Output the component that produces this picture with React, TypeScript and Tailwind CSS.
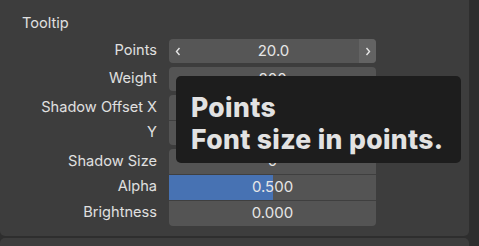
import React from 'react';

type Row = { label: string; value: string; h: string; fill?: number };

function Chevron({ dir }: { dir: 'left' | 'right' }) {
  return (
    <svg width="6" height="9" viewBox="0 0 6 9" className="shrink-0">
      <polyline
        points={dir === 'left' ? '4.5,1 1.5,4.5 4.5,8' : '1.5,1 4.5,4.5 1.5,8'}
        fill="none"
        stroke="#e6e6e6"
        strokeWidth="1.4"
      />
    </svg>
  );
}

function Label({ text }: { text: string }) {
  return <div className="w-[157px] shrink-0 text-right text-[14.6px] text-[#e0e0e0]">{text}</div>;
}

function Block({ rows }: { rows: Row[] }) {
  return (
    <div className="flex flex-col">
      {rows.map((r, i) => (
        <div key={r.label} className={`flex items-center gap-3 ${r.h}`}>
          <Label text={r.label} />
          <div
            className={`relative flex h-full w-[207px] items-center justify-center overflow-hidden bg-[#545454] text-[15px] text-[#e6e6e6] ${
              i === 0 ? 'rounded-t-[4px]' : 'border-t border-[#3f3f3f]'
            } ${i === rows.length - 1 ? 'rounded-b-[4px]' : ''}`}
          >
            {r.fill !== undefined && (
              <div className="absolute inset-y-0 left-0 bg-[#4772b3]" style={{ width: `${r.fill * 100}%` }} />
            )}
            <span className="relative">{r.value}</span>
          </div>
        </div>
      ))}
    </div>
  );
}

export default function App() {
  return (
    <div className="h-[246px] w-[479px] overflow-hidden bg-[#2e2e2e] font-['Inter',sans-serif]">
      <div className="relative h-[236px] w-[469px] rounded-b-[5px] bg-[#3d3d3d] pt-[13px]">
        <div className="pl-[22px] text-[14.6px] leading-5 text-[#e0e0e0]">Tooltip</div>

        <div className="mt-[6px] flex flex-col gap-1">
          <div className="flex h-6 items-center gap-3">
            <Label text="Points" />
            <div className="flex h-full w-[207px] items-center overflow-hidden rounded-[4px] bg-[#565656] text-[15px] text-[#e6e6e6]">
              <div className="flex w-[17px] justify-center">
                <Chevron dir="left" />
              </div>
              <div className="flex-1 pl-[2px] text-center">20.0</div>
              <div className="flex h-full w-[17px] items-center justify-center bg-[#636363]">
                <Chevron dir="right" />
              </div>
            </div>
          </div>

          <Block rows={[{ label: 'Weight', value: '800', h: 'h-6' }]} />

          <Block
            rows={[
              { label: 'Shadow Offset X', value: '', h: 'h-[25px]' },
              { label: 'Y', value: '', h: 'h-[25px]' },
            ]}
          />

          <Block
            rows={[
              { label: 'Shadow Size', value: '0', h: 'h-[25px]' },
              { label: 'Alpha', value: '0.500', h: 'h-[26px]', fill: 0.5 },
              { label: 'Brightness', value: '0.000', h: 'h-[26px]' },
            ]}
          />
        </div>

        {/* tooltip over the fields */}
        <div className="absolute left-[176px] top-[76px] w-[285px] rounded-[5px] bg-[#1d1d1d] px-[15px] pb-[8px] pt-[15px] text-[26.5px] font-extrabold leading-8 tracking-[0.35px] text-[#e2e2e2]">
          <div>Points</div>
          <div>Font size in points.</div>
        </div>
      </div>
      <div className="mt-[2px] h-[8px] w-[469px] rounded-t-[5px] bg-[#3d3d3d]" />
    </div>
  );
}
